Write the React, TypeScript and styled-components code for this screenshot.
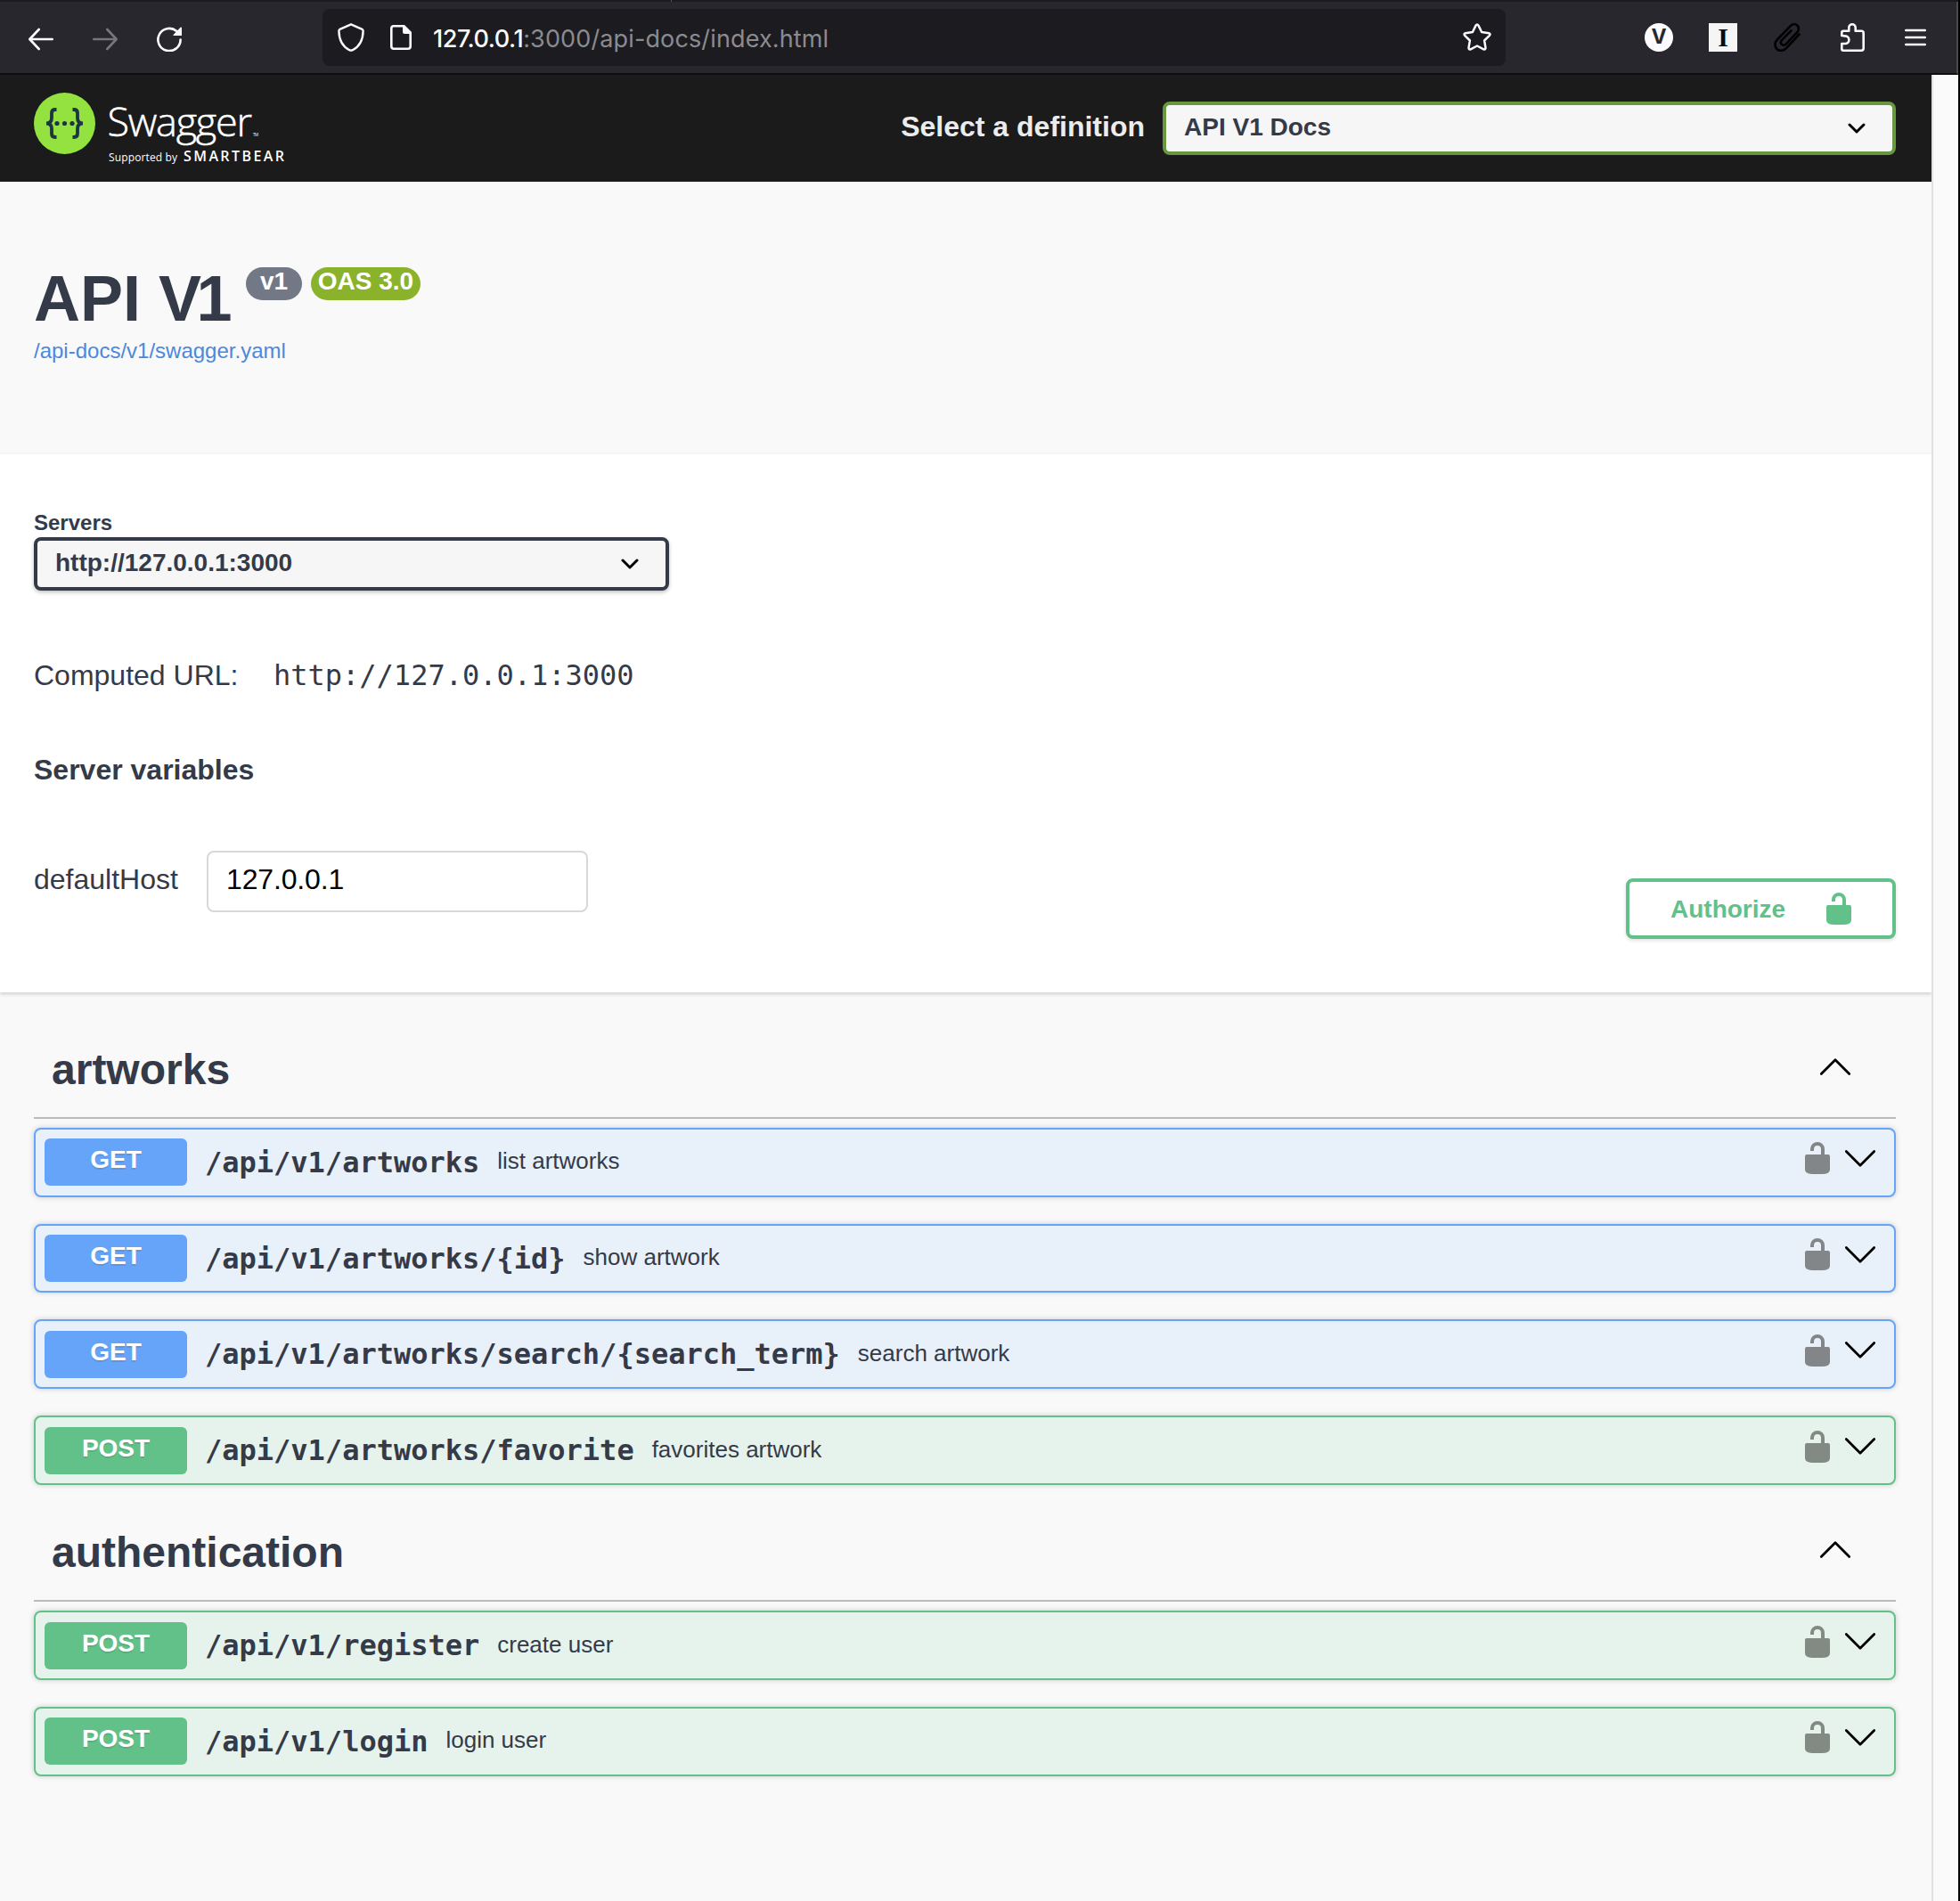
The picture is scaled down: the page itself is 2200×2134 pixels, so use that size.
import React from "react";
import styled, { createGlobalStyle } from "styled-components";

const ink = "#343a48";
const sans = `"Liberation Sans", Arial, Helvetica, sans-serif`;
const mono = `"DejaVu Sans Mono", Menlo, monospace`;

type Method = "GET" | "POST";
const palette: Record<Method, { main: string; tint: string; lock: string }> = {
  GET: { main: "#66a4fa", tint: "#e8f0fa", lock: "#838689" },
  POST: { main: "#62c189", tint: "#e6f3ec", lock: "#838983" },
};

const GlobalStyle = createGlobalStyle`
  *, *::before, *::after { box-sizing: border-box; }
  html, body { margin: 0; padding: 0; background: #fafafa; }
  body { font-family: ${sans}; color: ${ink}; overflow: hidden; }
  svg { display: block; flex: none; }
`;

const Window = styled.div`
  width: 2200px;
  height: 2134px;
  display: flex;
  flex-direction: column;
  background: #000;
  padding-right: 2px;
`;

const TabStrip = styled.div`
  height: 2px;
  flex: none;
  display: flex;
  padding-left: 753px;
  background: #1c1b22;
`;

const TabDivider = styled.div`
  width: 1px;
  background: #55545c;
`;

const Toolbar = styled.header`
  height: 82px;
  flex: none;
  display: flex;
  align-items: center;
  padding: 0 34px 0 32px;
  background: #28272e;
  border-bottom: 2px solid #0e0e10;
  border-right: 2px solid #4a4950;
`;

const NavButtons = styled.nav`
  width: 330px;
  display: flex;
  align-items: center;
  gap: 44px;
  padding-top: 3px;
`;

const AddressBar = styled.div`
  width: 1328px;
  height: 64px;
  display: flex;
  align-items: center;
  padding: 0 16px 0 17px;
  background: #1c1b20;
  border-radius: 8px;
`;

const AddressIcons = styled.div`
  display: flex;
  align-items: center;
  gap: 29px;
  width: 107px;
`;

const Address = styled.div`
  flex: 1;
  padding-top: 3px;
  font: 400 27px/40px Inter, "Liberation Sans", sans-serif;
  letter-spacing: 0.13px;
  color: #8b8b90;
  white-space: nowrap;
`;

const Host = styled.span`
  color: #fbfbfe;
  font-weight: 500;
  letter-spacing: -0.45px;
`;

const Extensions = styled.div`
  flex: 1;
  display: flex;
  justify-content: flex-end;
  align-items: center;
`;

const RoundBadge = styled.div`
  width: 32px;
  height: 32px;
  border-radius: 50%;
  background: #fbfbfe;
  color: #28272e;
  font: 700 23px/31px Inter, sans-serif;
  text-align: center;
  margin-right: 40px;
`;

const SquareBadge = styled.div`
  width: 32px;
  height: 32px;
  background: #f5f5f5;
  color: #0c0c0c;
  font: 700 30px/31px "Liberation Serif", serif;
  text-align: center;
  margin-right: 41px;
`;

const IconSpace = styled.div<{ $right: number }>`
  margin-right: ${(p) => p.$right}px;
`;

const Viewport = styled.div`
  flex: 1;
  display: flex;
  min-height: 0;
`;

const Page = styled.main`
  width: 2168px;
  display: flex;
  flex-direction: column;
  background: #f9f9f9;
`;

const Scrollbar = styled.div`
  flex: 1;
  background: #fafafa;
  border-left: 2px solid #e1e1e1;
`;

const Topbar = styled.div`
  height: 120px;
  flex: none;
  display: flex;
  align-items: center;
  justify-content: space-between;
  padding: 0 40px 0 38px;
  background: #1b1b1b;
`;

const LogoLink = styled.a`
  align-self: flex-start;
  margin-top: 20px;
`;

const DefinitionPicker = styled.label`
  display: flex;
  align-items: center;
  gap: 20px;
`;

const PickerLabel = styled.span`
  font: 700 32px/38px ${sans};
  color: #ececec;
  padding-bottom: 5px;
  white-space: nowrap;
`;

const SelectBox = styled.div<{ $width: number; $border: string; $shadow?: boolean; $right: number }>`
  width: ${(p) => p.$width}px;
  height: 60px;
  display: flex;
  align-items: center;
  justify-content: space-between;
  padding: 0 ${(p) => p.$right}px 0 20px;
  background: #f6f6f6;
  border: 4px solid ${(p) => p.$border};
  border-radius: 8px;
  box-shadow: ${(p) => (p.$shadow ? "0 2px 4px rgba(0,0,0,.25)" : "none")};
`;

const SelectText = styled.span`
  font: 700 28px/32px ${sans};
  color: ${ink};
  padding-bottom: 2px;
`;

const Info = styled.section`
  height: 306px;
  flex: none;
  padding: 91px 38px 0;
`;

const TitleRow = styled.div`
  display: flex;
  align-items: flex-start;
`;

const Title = styled.h1`
  margin: 0;
  width: 238px;
  font: 700 72px/80px ${sans};
  white-space: nowrap;
`;

const Kern = styled.span`
  letter-spacing: -5.5px;
`;

const VersionBadge = styled.span<{ $width: number; $bg: string }>`
  width: ${(p) => p.$width}px;
  height: 37px;
  margin: 5px 10px 0 0;
  border-radius: 19px;
  background: ${(p) => p.$bg};
  color: #fff;
  font: 700 28px/31px ${sans};
  text-align: center;
  white-space: nowrap;
`;

const SpecLink = styled.a`
  display: block;
  margin-top: 4px;
  font: 400 24px/30px ${sans};
  color: #4c88dc;
`;

const SchemePanel = styled.section`
  height: 604px;
  flex: none;
  display: flex;
  justify-content: space-between;
  padding: 62px 40px 60px 38px;
  background: #fff;
  box-shadow: 0 2px 4px rgba(0, 0, 0, 0.17);
`;

const Servers = styled.div`
  display: flex;
  flex-direction: column;
`;

const ServersTitle = styled.span`
  height: 31px;
  font: 700 24px/29px ${sans};
`;

const ComputedUrl = styled.div`
  height: 40px;
  margin-top: 75px;
  display: flex;
  align-items: center;
  font: 400 32px/40px ${sans};
`;

const ComputedLabel = styled.span`
  width: 269px;
`;

const ComputedValue = styled.code`
  font: 400 32px/40px ${mono};
`;

const VariablesTitle = styled.h4`
  margin: 66px 0 71px;
  font: 700 32px/40px ${sans};
`;

const VariableRow = styled.div`
  display: flex;
  align-items: center;
`;

const VariableName = styled.span`
  width: 194px;
  padding-bottom: 5px;
  font: 400 32px/40px ${sans};
`;

const VariableInput = styled.input`
  width: 428px;
  height: 69px;
  padding: 0 20px 5px;
  border: 2px solid #d8d8d8;
  border-radius: 8px;
  background: #fff;
  color: #000;
  font: 400 32px/40px ${sans};
  letter-spacing: -0.15px;
`;

const AuthorizeButton = styled.button`
  align-self: flex-end;
  width: 303px;
  height: 68px;
  display: flex;
  align-items: center;
  justify-content: space-between;
  padding: 0 46px;
  border: 4px solid ${palette.POST.main};
  border-radius: 8px;
  background: #fff;
  color: ${palette.POST.main};
  font: 700 28px/32px ${sans};
  box-shadow: 0 2px 4px rgba(0, 0, 0, 0.12);
`;

const AuthorizeLabel = styled.span`
  padding-top: 1px;
`;

const Operations = styled.section`
  padding: 41px 40px 0 38px;
`;

const TagGroup = styled.div`
  & + & { padding-top: 0.6px; }
`;

const TagHeader = styled.h3`
  height: 101px;
  margin: 0 0 10px;
  display: flex;
  align-items: center;
  justify-content: space-between;
  padding: 0 51px 8px 20px;
  border-bottom: 2px solid #b9b9c0;
  font: 700 48px/60px ${sans};

  svg { margin-bottom: 6px; }
`;

const OpBlock = styled.div<{ $method: Method }>`
  height: 77.7px;
  margin-bottom: 30px;
  display: flex;
  align-items: flex-start;
  padding: 10.45px 21px 0 10px;
  border: 2px solid ${(p) => palette[p.$method].main};
  border-radius: 8px;
  background: ${(p) => palette[p.$method].tint};
  box-shadow: 0 0 6px rgba(0, 0, 0, 0.19);
`;

const MethodBadge = styled.span<{ $method: Method }>`
  width: 160px;
  height: 53px;
  border-radius: 6px;
  background: ${(p) => palette[p.$method].main};
  color: #fff;
  font: 700 28px/48px ${sans};
  text-align: center;
  text-shadow: 0 2px 0 rgba(0, 0, 0, 0.1);
`;

const Path = styled.span`
  margin: -0.6px 0 0 20px;
  font: 700 32px/54px ${mono};
  white-space: nowrap;
`;

const Summary = styled.span`
  flex: 1;
  margin-left: 20px;
  font: 400 26px/50px ${sans};
`;

const OpControls = styled.div`
  display: flex;
  align-items: center;
  gap: 17px;
  padding-top: 4px;
`;

const Lock = ({ color }: { color: string }) => (
  <svg width="28" height="36" viewBox="0 0 28 36">
    <path d="M8 10V8a6 6 0 0 1 12 0v7" fill="none" stroke={color} strokeWidth="4" />
    <path d="M2 14h24q2 0 2 2v15q0 5-9 5h-10q-9 0-9-5V16q0-2 2-2z" fill={color} />
  </svg>
);

const Chevron = ({ up = false }: { up?: boolean }) => (
  <svg width="34" height="19" viewBox="0 0 34 19">
    <path
      d={up ? "M1.3 17.5 17 1.8 32.7 17.5" : "M1.3 1.5 17 17.2 32.7 1.5"}
      fill="none" stroke="#000" strokeWidth="2.8" strokeLinecap="round" strokeLinejoin="round"
    />
  </svg>
);

const SelectArrow = () => (
  <svg width="20" height="12" viewBox="0 0 20 12">
    <path d="M2 2l8 8 8-8" fill="none" stroke="#000" strokeWidth="3" strokeLinecap="round" strokeLinejoin="round" />
  </svg>
);

const ArrowIcon = ({ forward = false }: { forward?: boolean }) => (
  <svg width="28" height="26" viewBox="0 0 28 26" fill="none" stroke={forward ? "#77767b" : "#fbfbfe"}
    strokeWidth="2.6" strokeLinecap="round" strokeLinejoin="round">
    <path d={forward ? "M1.3 13H26M16.3 2 26.7 13 16.3 24" : "M26.7 13H2M11.7 2 1.3 13 11.7 24"} />
  </svg>
);

const ReloadIcon = () => (
  <svg width="28" height="28" viewBox="0 0 28 28">
    <path d="M26.6 14.500A12.600 12.600 0 1 1 22 4.800" fill="none" stroke="#fbfbfe" strokeWidth="2.600" strokeLinecap="round" />
    <path d="M28 1.200V10h-9q-1 0-.4-1L26.500.8q1.500-1 1.500.4z" fill="#fbfbfe" />
  </svg>
);

const ShieldIcon = () => (
  <svg width="30" height="32" viewBox="0 0 30 32" fill="none" stroke="#fbfbfe" strokeWidth="2.4" strokeLinejoin="round">
    <path d="M15 1.3 27.500 6.900q1.100.5 1.100 1.800c-.2 10.500-4 17.500-11.900 21.500q-1.700.8-3.400 0C5.400 26.200 1.600 19.200 1.400 8.700q0-1.300 1.100-1.800z" />
  </svg>
);

const FileIcon = () => (
  <svg width="24" height="28" viewBox="0 0 24 28">
    <path d="M15 1.300H4q-2.700 0-2.700 2.700v20q0 2.700 2.700 2.700h16q2.700 0 2.700-2.700V9" fill="none" stroke="#fbfbfe" strokeWidth="2.600" />
    <path d="M14 0h2l8 8v2h-8q-2 0-2-2z" fill="#fbfbfe" />
  </svg>
);

const StarIcon = () => (
  <svg width="32" height="32" viewBox="0 0 32 32" fill="none" stroke="#fbfbfe" strokeWidth="2.500" strokeLinejoin="round">
    <path d="M14.500 2.600q1.500-2.300 3 0l3.600 7.400 8 1.200q2.300.7.800 2.600l-5.800 5.700 1.400 8.100q0 2.400-2.200 1.700L16 25.500l-7.300 3.800q-2.200.7-2.200-1.700l1.400-8.100-5.800-5.700q-1.500-1.900.8-2.600l8-1.200z" />
  </svg>
);

const ClipIcon = () => (
  <svg width="30" height="32" viewBox="0 0 30 32" fill="none" stroke="#000" strokeWidth="2.600" strokeLinecap="round">
    <path d="M28.500 12.500 14.500 27.600c-3.300 3.600-7.800 4.300-10.800 1.600s-3-7.300.1-10.700L18.500 3.300c2.400-2.500 5.700-2.700 7.800-.8s2.200 5.300 0 7.700L13.800 23.300c-1.500 1.600-3.600 1.700-4.900.5s-1.200-3.300.2-4.900L19.500 8.300" />
  </svg>
);

const PuzzleIcon = () => (
  <svg width="27" height="32" viewBox="0 0 27 32" fill="none" stroke="#fbfbfe" strokeWidth="2.600" strokeLinejoin="round">
    <path d="M1.300 14v-3.500q0-1.700 1.700-1.700h6.300V5a3.700 3.700 0 0 1 7.400 0v3.800h6.600q2.400 0 2.400 2.400v17.100q0 2.400-2.400 2.400H3q-1.700 0-1.700-1.700v-6h3.800a4.300 4.300 0 0 0 0-8.600z" />
  </svg>
);

const MenuIcon = () => (
  <svg width="24" height="20" viewBox="0 0 24 20" stroke="#fbfbfe" strokeWidth="2.400" strokeLinecap="round">
    <path d="M1.200 2h21.600M1.200 10h21.600M1.200 18h21.600" />
  </svg>
);

const SwaggerLogo = () => (
  <svg width="284" height="84" viewBox="0 0 284 84">
    <circle cx="34.500" cy="34.500" r="34.500" fill="#93e23f" />
    <g fill="none" stroke="#1c3540" strokeWidth="3.800">
      <path d="M25.500 19h-1.500q-4 0-4 4v5.500q0 6-6 6 6 0 6 6V46q0 4 4 4h1.500" />
      <path d="M43.500 19h1.500q4 0 4 4v5.500q0 6 6 6-6 0-6 6V46q0 4-4 4h-1.500" />
    </g>
    <g fill="#1c3540">
      <circle cx="26" cy="34.500" r="2.600" />
      <circle cx="34.500" cy="34.500" r="2.600" />
      <circle cx="43" cy="34.500" r="2.600" />
    </g>
    <g fill="#fff" fontFamily='"Open Sans", "Noto Sans", sans-serif'>
      <text x="82.500" y="48.500" fontSize="45" fontWeight="300" stroke="#fff" strokeWidth="0.500" textLength="162.500">Swagger</text>
      <text x="246" y="48.500" fontSize="4.500" textLength="6">TM</text>
      <text x="84" y="77" fontSize="12" textLength="77">Supported by</text>
      <text x="168" y="77" fontSize="16" fontWeight="600" textLength="113">SMARTBEAR</text>
    </g>
  </svg>
);

interface Operation { method: Method; path: string; summary: string }

const groups: { tag: string; operations: Operation[] }[] = [
  {
    tag: "artworks",
    operations: [
      { method: "GET", path: "/api/v1/artworks", summary: "list artworks" },
      { method: "GET", path: "/api/v1/artworks/{id}", summary: "show artwork" },
      { method: "GET", path: "/api/v1/artworks/search/{search_term}", summary: "search artwork" },
      { method: "POST", path: "/api/v1/artworks/favorite", summary: "favorites artwork" },
    ],
  },
  {
    tag: "authentication",
    operations: [
      { method: "POST", path: "/api/v1/register", summary: "create user" },
      { method: "POST", path: "/api/v1/login", summary: "login user" },
    ],
  },
];

const OperationRow = ({ method, path, summary }: Operation) => (
  <OpBlock $method={method}>
    <MethodBadge $method={method}>{method}</MethodBadge>
    <Path>{path}</Path>
    <Summary>{summary}</Summary>
    <OpControls>
      <Lock color={palette[method].lock} />
      <Chevron />
    </OpControls>
  </OpBlock>
);

export default function App() {
  return (
    <>
      <GlobalStyle />
      <Window>
        <TabStrip><TabDivider /></TabStrip>
        <Toolbar>
          <NavButtons>
            <ArrowIcon />
            <ArrowIcon forward />
            <ReloadIcon />
          </NavButtons>
          <AddressBar>
            <AddressIcons><ShieldIcon /><FileIcon /></AddressIcons>
            <Address><Host>127.0.0.1</Host>:3000/api-docs/index.html</Address>
            <StarIcon />
          </AddressBar>
          <Extensions>
            <RoundBadge>V</RoundBadge>
            <SquareBadge>I</SquareBadge>
            <IconSpace $right={45}><ClipIcon /></IconSpace>
            <IconSpace $right={45}><PuzzleIcon /></IconSpace>
            <MenuIcon />
          </Extensions>
        </Toolbar>
        <Viewport>
          <Page>
            <Topbar>
              <LogoLink><SwaggerLogo /></LogoLink>
              <DefinitionPicker>
                <PickerLabel>Select a definition</PickerLabel>
                <SelectBox $width={823} $border="#67973f" $right={30}>
                  <SelectText>API V1 Docs</SelectText>
                  <SelectArrow />
                </SelectBox>
              </DefinitionPicker>
            </Topbar>
            <Info>
              <TitleRow>
                <Title>API <Kern>V</Kern>1</Title>
                <VersionBadge $width={63} $bg="#737887">v1</VersionBadge>
                <VersionBadge $width={123} $bg="#8ab32b">OAS 3.0</VersionBadge>
              </TitleRow>
              <SpecLink>/api-docs/v1/swagger.yaml</SpecLink>
            </Info>
            <SchemePanel>
              <Servers>
                <ServersTitle>Servers</ServersTitle>
                <SelectBox $width={713} $border={ink} $right={30} $shadow>
                  <SelectText>http://127.0.0.1:3000</SelectText>
                  <SelectArrow />
                </SelectBox>
                <ComputedUrl>
                  <ComputedLabel>Computed URL:</ComputedLabel>
                  <ComputedValue>http://127.0.0.1:3000</ComputedValue>
                </ComputedUrl>
                <VariablesTitle>Server variables</VariablesTitle>
                <VariableRow>
                  <VariableName>defaultHost</VariableName>
                  <VariableInput defaultValue="127.0.0.1" />
                </VariableRow>
              </Servers>
              <AuthorizeButton>
                <AuthorizeLabel>Authorize</AuthorizeLabel>
                <Lock color={palette.POST.main} />
              </AuthorizeButton>
            </SchemePanel>
            <Operations>
              {groups.map((g) => (
                <TagGroup key={g.tag}>
                  <TagHeader>{g.tag}<Chevron up /></TagHeader>
                  {g.operations.map((op) => <OperationRow key={op.path} {...op} />)}
                </TagGroup>
              ))}
            </Operations>
          </Page>
          <Scrollbar />
        </Viewport>
      </Window>
    </>
  );
}
